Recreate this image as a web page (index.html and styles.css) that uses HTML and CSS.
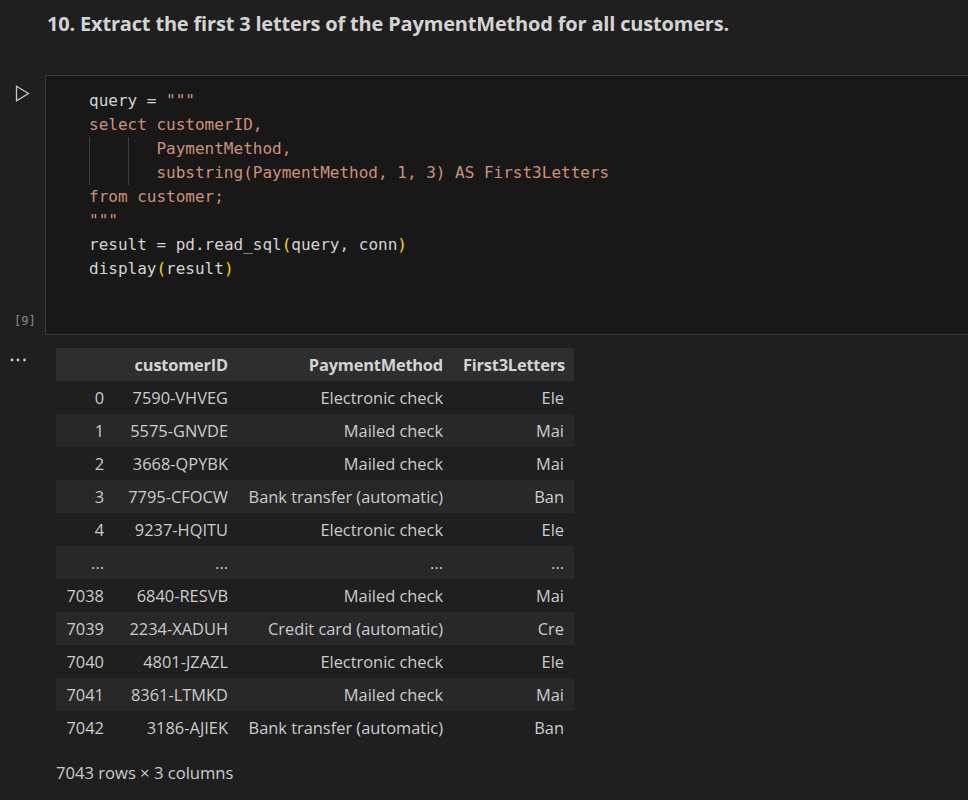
FILE: index.html
```html
<!DOCTYPE html>
<html>
<head>
<meta charset="utf-8">
<link rel="stylesheet" href="styles.css">
</head>
<body>
<div class="md">
  <h3 class="title">10. Extract the first 3 letters of the PaymentMethod for all customers.</h3>
</div>

<div class="cell">
  <div class="gutter">
    <svg class="run" width="15" height="17" viewBox="0 0 15 17"><path d="M1.5 1.2 L13.5 8.5 L1.5 15.8 Z" fill="none" stroke="#c5c5c5" stroke-width="1.3" stroke-linejoin="miter"/></svg>
    <div class="count">[9]</div>
  </div>
  <div class="editor">
<pre class="code"><span class="line"><span class="v">query</span> = <span class="s">"""</span></span>
<span class="line"><span class="s">select customerID,</span></span>
<span class="line"><span class="g">    </span><span class="g">   </span><span class="s">PaymentMethod,</span></span>
<span class="line"><span class="g">    </span><span class="g">   </span><span class="s">substring(PaymentMethod, 1, 3) AS First3Letters</span></span>
<span class="line"><span class="s">from customer;</span></span>
<span class="line"><span class="s">"""</span></span>
<span class="line"><span class="v">result</span> = <span class="v">pd</span>.<span class="v">read_sql</span><span class="p">(</span><span class="v">query</span>, <span class="v">conn</span><span class="p">)</span></span>
<span class="line"><span class="v">display</span><span class="p">(</span><span class="v">result</span><span class="p">)</span></span></pre>
  </div>
</div>

<div class="output">
  <div class="gutter out-gutter">
    <svg class="dots" width="18" height="4" viewBox="0 0 18 4"><circle cx="3" cy="2" r="1.4" fill="#cccccc"/><circle cx="9" cy="2" r="1.4" fill="#cccccc"/><circle cx="15.5" cy="2" r="1.4" fill="#cccccc"/></svg>
  </div>
  <div class="out-body">
    <table class="df">
      <thead>
        <tr><th class="c0"></th><th class="c1">customerID</th><th class="c2">PaymentMethod</th><th class="c3">First3Letters</th></tr>
      </thead>
      <tbody>
        <tr><th>0</th><td>7590-VHVEG</td><td>Electronic check</td><td>Ele</td></tr>
        <tr><th>1</th><td>5575-GNVDE</td><td>Mailed check</td><td>Mai</td></tr>
        <tr><th>2</th><td>3668-QPYBK</td><td>Mailed check</td><td>Mai</td></tr>
        <tr><th>3</th><td>7795-CFOCW</td><td>Bank transfer (automatic)</td><td>Ban</td></tr>
        <tr><th>4</th><td>9237-HQITU</td><td>Electronic check</td><td>Ele</td></tr>
        <tr><th>...</th><td>...</td><td>...</td><td>...</td></tr>
        <tr><th>7038</th><td>6840-RESVB</td><td>Mailed check</td><td>Mai</td></tr>
        <tr><th>7039</th><td>2234-XADUH</td><td>Credit card (automatic)</td><td>Cre</td></tr>
        <tr><th>7040</th><td>4801-JZAZL</td><td>Electronic check</td><td>Ele</td></tr>
        <tr><th>7041</th><td>8361-LTMKD</td><td>Mailed check</td><td>Mai</td></tr>
        <tr><th>7042</th><td>3186-AJIEK</td><td>Bank transfer (automatic)</td><td>Ban</td></tr>
      </tbody>
    </table>
    <p class="shape">7043 rows × 3 columns</p>
  </div>
</div>
</body>
</html>
```

FILE: styles.css
```css
html, body {
  margin: 0;
  padding: 0;
  background: #1f1f1f;
  overflow: hidden;
}
body {
  width: 968px;
  height: 800px;
  font-family: "Open Sans", "Noto Sans", sans-serif;
  color: #cccccc;
}

.md {
  padding: 9px 0 0 47px;
  height: 66px;
  box-sizing: border-box;
}
.title {
  margin: 0;
  font-size: 20px;
  font-weight: 700;
  line-height: 30px;
  color: #d4d4d4;
  letter-spacing: -0.18px;
}

.cell {
  display: flex;
  margin-top: 9px;
}
.gutter {
  width: 45px;
  flex: none;
  position: relative;
}
.run {
  display: block;
  margin: 10px 0 0 15px;
}
.count {
  position: absolute;
  left: 14px;
  top: 239px;
  font-family: "DejaVu Sans Mono", monospace;
  font-size: 12px;
  color: #8b8b8b;
}

.editor {
  flex: 1;
  height: 260px;
  box-sizing: border-box;
  background: #181818;
  border: 1px solid #3a3a3a;
  border-right: none;
  padding: 13px 0 0 43px;
}
.code {
  margin: 0;
  font-family: "DejaVu Sans Mono", "Liberation Mono", monospace;
  font-size: 16px;
  line-height: 24px;
  color: #d4d4d4;
}
.line { display: inline-block; height: 24px; }
.s { color: #ce9178; }
.p { color: #ffd700; }
.v { color: #d4d4d4; }
.g {
  display: inline-block;
  height: 24px;
  vertical-align: top;
  box-shadow: inset 1px 0 0 #404040;
}

.output {
  display: flex;
  margin-top: 13px;
}
.out-gutter .dots {
  display: block;
  margin: 10px 0 0 9px;
}
.out-body {
  padding-left: 11px;
}

.df {
  border-collapse: collapse;
  table-layout: fixed;
  width: 518px;
  font-size: 16.4px;
  color: #cccccc;
}
.df th, .df td {
  height: 33px;
  padding: 0 10px;
  text-align: right;
  white-space: nowrap;
  box-sizing: border-box;
}
.df thead th {
  background: #2e2e2e;
  font-weight: 700;
  letter-spacing: -0.2px;
  color: #d4d4d4;
}
.df tbody th { font-weight: 400; }
.df tbody tr:nth-child(even) { background: #282828; }
.c0 { width: 58px; }
.c1 { width: 124px; }
.c2 { width: 215px; }
.c3 { width: 121px; }

.shape {
  margin: 18px 0 0 0;
  font-size: 16.6px;
  line-height: 22px;
  color: #cccccc;
}
```
